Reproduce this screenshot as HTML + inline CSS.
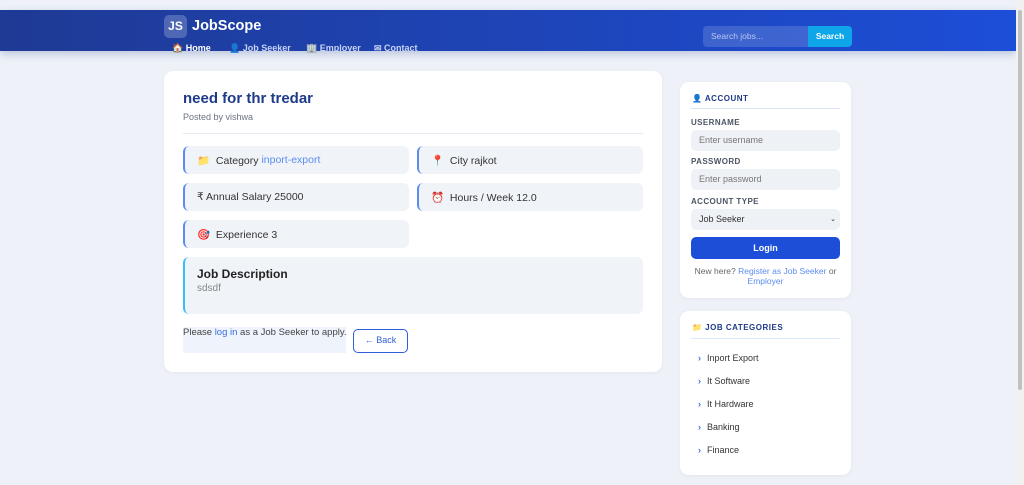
<!DOCTYPE html><html><head><style>
*{box-sizing:border-box;margin:0;padding:0}
body{width:1024px;height:485px;overflow:hidden;background:#eef2f8;font-family:"Liberation Sans",sans-serif;position:relative}
.a{position:absolute}
.hdr{left:0;top:10px;width:1016px;height:41px;background:linear-gradient(90deg,#1e3a94,#1d4ed8);box-shadow:0 3px 8px rgba(30,58,138,.25)}
.logo{left:164px;top:15px;width:23px;height:23px;border-radius:5px;background:rgba(255,255,255,.22);color:#fff;font-weight:bold;font-size:12px;text-align:center;line-height:23px}
.nav{top:43px;font-size:9px;color:#c9d4f5;font-weight:bold}
.card{background:#fff;border-radius:9px;box-shadow:0 1px 4px rgba(0,0,0,.05)}
.box{background:#f0f3f8;border-radius:6px;border-left:2px solid #5b8def;font-size:10.5px;color:#333;padding-left:12px;display:flex;align-items:center;white-space:nowrap}
.lbl{font-size:8px;font-weight:bold;color:#4b5563;letter-spacing:.4px;left:691px}
.inp{left:691px;width:149px;height:21px;background:#eef1f6;border-radius:5px;font-size:9px;color:#777;padding-left:8px;line-height:21px}
.cat{left:698px;font-size:9px;color:#333}
.cat b{color:#3b6fe0;margin-right:6px;font-size:9px}
</style></head><body>
<div class="a hdr"></div>
<div class="a logo">JS</div>
<div class="a" style="left:192px;top:18px;color:#fff;font-weight:bold;font-size:14.5px">JobScope</div>
<div class="a nav" style="left:172px">🏠 <span style="color:#fff">Home</span></div>
<div class="a nav" style="left:229px">👤 Job Seeker</div>
<div class="a nav" style="left:306px">🏢 Employer</div>
<div class="a nav" style="left:374px">✉ Contact</div>
<div class="a" style="left:703px;top:26px;width:105px;height:21px;background:rgba(255,255,255,.15);border-radius:4px 0 0 4px;font-size:8.5px;color:#b8c6f0;padding-left:8px;line-height:21px">Search jobs...</div>
<div class="a" style="left:808px;top:26px;width:44px;height:21px;background:#0ea5e9;border-radius:0 4px 4px 0;font-size:8.5px;color:#fff;font-weight:bold;text-align:center;line-height:21px">Search</div>
<div class="a" style="left:1016px;top:0;width:8px;height:485px;background:#f1f1f1"></div>
<div class="a" style="left:1018px;top:10px;width:4px;height:380px;background:#c1c1c1;border-radius:2px"></div>

<div class="a card" style="left:164px;top:71px;width:498px;height:301px"></div>
<div class="a" style="left:183px;top:90px;font-size:15px;font-weight:bold;color:#1e3a8a">need for thr tredar</div>
<div class="a" style="left:183px;top:112px;font-size:9px;color:#6b7280">Posted by vishwa</div>
<div class="a" style="left:183px;top:133px;width:460px;height:1px;background:#e5eaf2"></div>
<div class="a box" style="left:183px;top:146px;width:226px;height:28px">📁&nbsp; Category&nbsp;<span style="color:#5b8def">inport-export</span></div>
<div class="a box" style="left:417px;top:146px;width:226px;height:28px">📍&nbsp; City rajkot</div>
<div class="a box" style="left:183px;top:183px;width:226px;height:28px">₹ Annual Salary 25000</div>
<div class="a box" style="left:417px;top:183px;width:226px;height:28px">⏰&nbsp; Hours / Week 12.0</div>
<div class="a box" style="left:183px;top:220px;width:226px;height:28px">🎯&nbsp; Experience 3</div>
<div class="a box" style="left:183px;top:257px;width:460px;height:57px;border-left-color:#38bdf8;display:block;padding-top:10px"><div style="font-weight:bold;font-size:12px;color:#222">Job Description</div><div style="color:#888;font-size:10px;margin-top:2px">sdsdf</div></div>
<div class="a" style="left:183px;top:327px;width:163px;height:26px;background:#eef3fc;font-size:9.5px;color:#444;white-space:nowrap">Please <span style="color:#3b6fe0">log in</span> as a Job Seeker to apply.</div>
<div class="a" style="left:353px;top:329px;width:55px;height:24px;border:1.5px solid #2f5ed8;border-radius:5px;font-size:9px;color:#2f5ed8;text-align:center;line-height:21px">← Back</div>

<div class="a card" style="left:680px;top:82px;width:171px;height:216px"></div>
<div class="a" style="left:692px;top:94px;font-size:8px;font-weight:bold;color:#1e3a8a;letter-spacing:.5px">👤 ACCOUNT</div>
<div class="a" style="left:691px;top:108px;width:149px;height:1px;background:#dbe6fb"></div>
<div class="a lbl" style="top:118px">USERNAME</div>
<div class="a inp" style="top:130px">Enter username</div>
<div class="a lbl" style="top:157px">PASSWORD</div>
<div class="a inp" style="top:169px">Enter password</div>
<div class="a lbl" style="top:197px">ACCOUNT TYPE</div>
<div class="a inp" style="top:209px;color:#333">Job Seeker<span style="position:absolute;right:4px;font-size:7px">⌄</span></div>
<div class="a" style="left:691px;top:237px;width:149px;height:22px;background:#1d4ed8;border-radius:5px;color:#fff;font-weight:bold;font-size:9px;text-align:center;line-height:22px">Login</div>
<div class="a" style="left:691px;top:266px;width:149px;text-align:center;font-size:8.5px;color:#666;line-height:10px">New here? <span style="color:#5b8def">Register as Job Seeker</span> or <span style="color:#5b8def">Employer</span></div>

<div class="a card" style="left:680px;top:311px;width:171px;height:164px"></div>
<div class="a" style="left:692px;top:323px;font-size:8px;font-weight:bold;color:#1e3a8a;letter-spacing:.5px">📁 JOB CATEGORIES</div>
<div class="a" style="left:691px;top:338px;width:149px;height:1px;background:#dbeafe"></div>
<div class="a cat" style="top:353px"><b>›</b>Inport Export</div>
<div class="a cat" style="top:376px"><b>›</b>It Software</div>
<div class="a cat" style="top:399px"><b>›</b>It Hardware</div>
<div class="a cat" style="top:422px"><b>›</b>Banking</div>
<div class="a cat" style="top:445px"><b>›</b>Finance</div>
</body></html>
